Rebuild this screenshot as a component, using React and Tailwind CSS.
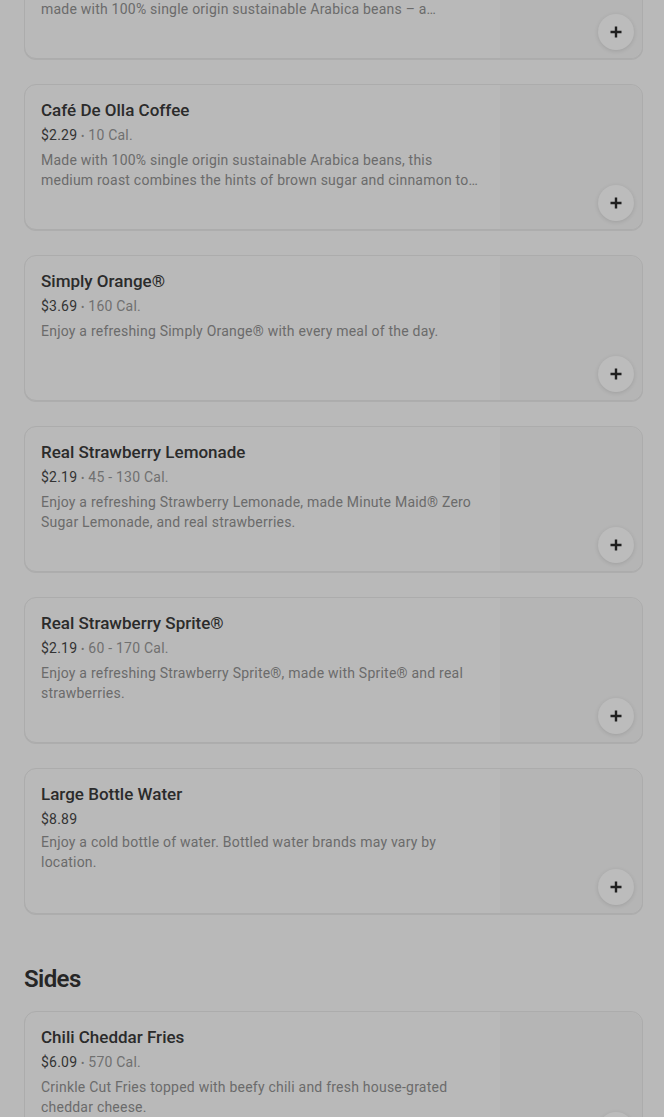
import React from 'react';

const drinks = [
  {
    name: 'Premium Roast Coffee',
    price: '$2.29',
    cal: '10 Cal.',
    desc: 'Start the day right with a fresh cup of our Premium Roast Coffee, made with 100% single origin sustainable Arabica beans – a medium roast with a smooth, balanced finish.',
  },
  {
    name: 'Café De Olla Coffee',
    price: '$2.29',
    cal: '10 Cal.',
    desc: 'Made with 100% single origin sustainable Arabica beans, this medium roast combines the hints of brown sugar and cinnamon to create a traditional Mexican coffee taste.',
  },
  {
    name: 'Simply Orange®',
    price: '$3.69',
    cal: '160 Cal.',
    desc: 'Enjoy a refreshing Simply Orange® with every meal of the day.',
  },
  {
    name: 'Real Strawberry Lemonade',
    price: '$2.19',
    cal: '45 - 130 Cal.',
    desc: 'Enjoy a refreshing Strawberry Lemonade, made Minute Maid® Zero Sugar Lemonade, and real strawberries.',
  },
  {
    name: 'Real Strawberry Sprite®',
    price: '$2.19',
    cal: '60 - 170 Cal.',
    desc: 'Enjoy a refreshing Strawberry Sprite®, made with Sprite® and real strawberries.',
  },
  {
    name: 'Large Bottle Water',
    price: '$8.89',
    cal: null,
    desc: 'Enjoy a cold bottle of water. Bottled water brands may vary by location.',
  },
];

const sides = [
  {
    name: 'Chili Cheddar Fries',
    price: '$6.09',
    cal: '570 Cal.',
    desc: 'Crinkle Cut Fries topped with beefy chili and fresh house-grated cheddar cheese.',
  },
];

const PlusIcon = () => (
  <svg width="14" height="14" viewBox="0 0 14 14" fill="none">
    <path d="M7 1.5v11M1.5 7h11" stroke="#1f1f1f" strokeWidth="2.4" />
  </svg>
);

const ItemCard = ({ item }) => (
  <div className="relative flex h-[146px] rounded-xl border border-[#acacac] bg-[#b9b9b9] shadow-[0_1px_0_#adadad]">
    <div className="flex-1 pl-4 pr-5 pt-[15px] min-w-0">
      <h3 className="text-[17px] leading-5 font-medium text-[#2b2b2b]">{item.name}</h3>
      <p className="mt-[5px] text-sm leading-5 tracking-[0.016em] text-[#707070]">
        <span className="text-[#333333]">{item.price}</span>
        {item.cal && <span> <span className="text-[10px]">•</span> {item.cal}</span>}
      </p>
      <p className="mt-[3px] text-sm leading-5 tracking-[0.016em] text-[#6b6b6b] line-clamp-2">{item.desc}</p>
    </div>
    <div className="w-[142px] shrink-0 rounded-r-xl bg-[#b5b5b5]" />
    <button className="absolute right-2 bottom-2 flex h-9 w-9 items-center justify-center rounded-full bg-[#bcbcbc] shadow-[0_1px_4px_rgba(0,0,0,0.12)]">
      <PlusIcon />
    </button>
  </div>
);

export default function App() {
  return (
    <div className="min-h-[1117px] overflow-hidden bg-[#b9b9b9]" style={{ fontFamily: 'Roboto, "Noto Sans", sans-serif' }}>
      <div className="-mt-[87px] pl-6 pr-[21px]">
        <div className="flex flex-col gap-[25px]">
          {drinks.map((item) => (
            <ItemCard key={item.name} item={item} />
          ))}
        </div>
        <h2 className="mt-[49px] mb-4 text-2xl leading-8 font-semibold tracking-tight text-[#262626]">Sides</h2>
        <div className="flex flex-col gap-[25px]">
          {sides.map((item) => (
            <ItemCard key={item.name} item={item} />
          ))}
        </div>
      </div>
    </div>
  );
}
